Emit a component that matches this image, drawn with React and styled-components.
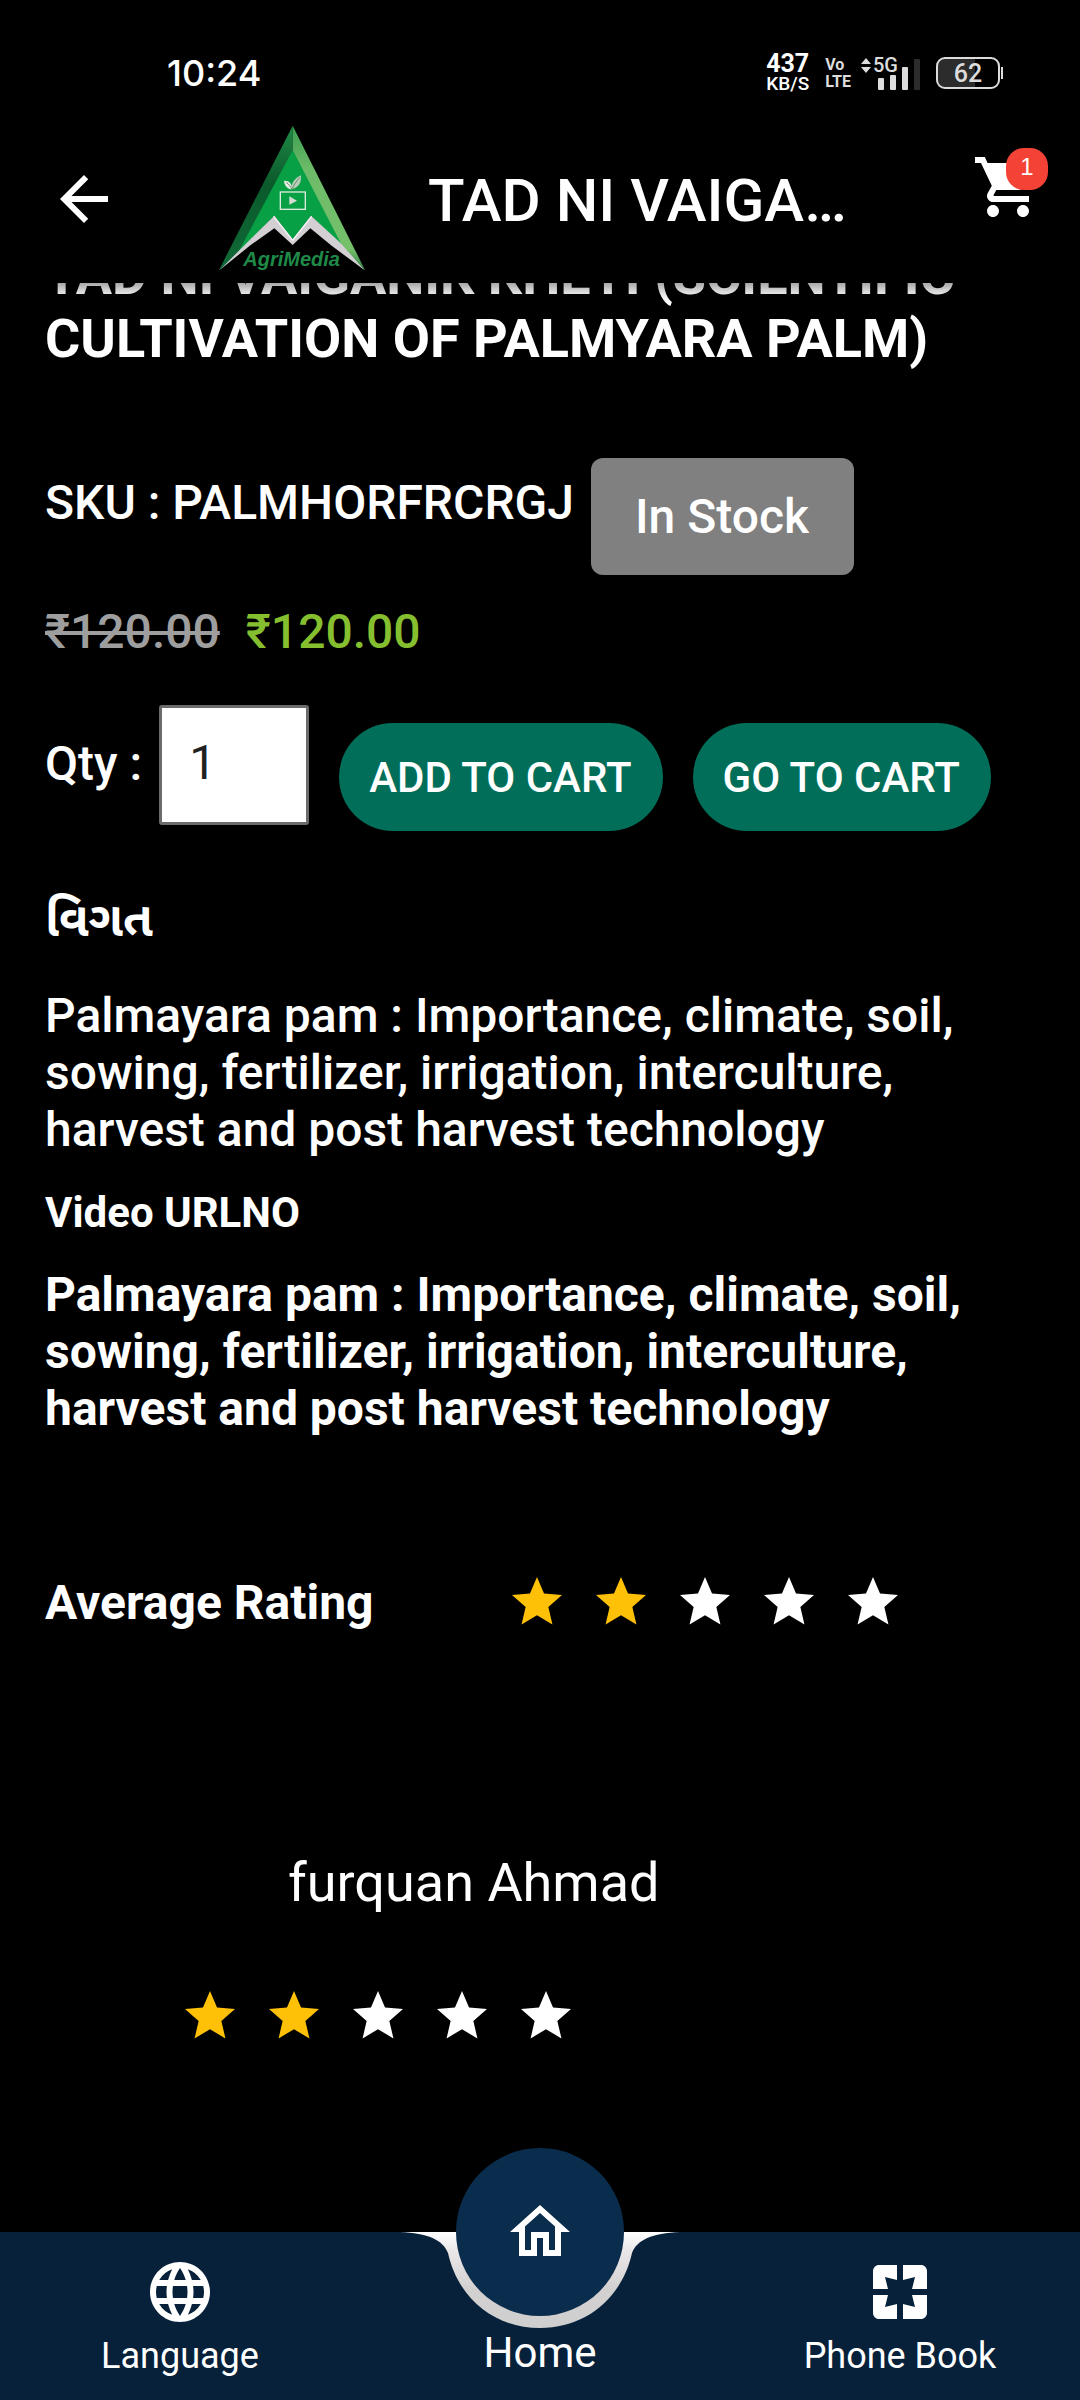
import { useState } from "react";
import styled, { createGlobalStyle } from "styled-components";
import {
  MdArrowBack,
  MdLanguage,
  MdOutlineHome,
  MdPages,
  MdShoppingCart,
  MdStar,
} from "react-icons/md";

const summary =
  "Palmayara pam : Importance, climate, soil, sowing, fertilizer, irrigation, interculture, harvest and post harvest technology";

const SignalIcon = () => (
  <svg width="60" height="34" viewBox="0 0 60 34" aria-hidden="true">
    <path d="M0 8L5 2l5 6zM0 11L5 17l5-6z" fill="#dcdcdc" />
    <rect x="17" y="22" width="6" height="12" rx="1" fill="#dcdcdc" />
    <rect x="29" y="19" width="6" height="15" rx="1" fill="#dcdcdc" />
    <rect x="41" y="11" width="6" height="23" rx="1" fill="#dcdcdc" />
    <rect x="53" y="3" width="6" height="31" rx="1" fill="#2c2c2c" />
    <text
      x="12"
      y="16"
      fill="#dcdcdc"
      fontFamily="Roboto, sans-serif"
      fontSize="20"
      fontWeight="500"
    >
      5G
    </text>
  </svg>
);

const Logo = () => (
  <svg width="150" height="150" viewBox="50 30 450 450" role="img" aria-label="AgriMedia">
    <defs>
      <linearGradient id="leftSide" x1="0" y1="0" x2="0" y2="1">
        <stop offset="0" stopColor="#1f8a45" />
        <stop offset="0.4" stopColor="#0b5a2c" />
        <stop offset="1" stopColor="#0f6a37" />
      </linearGradient>
      <linearGradient id="rightSide" x1="0" y1="0" x2="0" y2="1">
        <stop offset="0" stopColor="#3a9e50" />
        <stop offset="0.3" stopColor="#6dbb69" />
        <stop offset="0.85" stopColor="#76c06a" />
        <stop offset="1" stopColor="#2e7d45" />
      </linearGradient>
    </defs>
    <path d="M277 35L55 470L130 402L277 110z" fill="url(#leftSide)" />
    <path d="M277 35L495 470L425 405L277 110z" fill="url(#rightSide)" />
    <path d="M277 108L112 418L222 306L277 378L332 306L432 408z" fill="#08a045" />
    <path
      d="M222 305L277 376L332 305L420 386L492 468L395 396L330 343L277 393L222 343L150 394L58 468L130 396z"
      fill="#d3cfd3"
    />
    <path d="M220 307L277 379L334 307" fill="none" stroke="#f6f4f6" strokeWidth="4" />
    <rect x="240" y="234" width="75" height="52" fill="none" stroke="#dfe9df" strokeWidth="4" />
    <path d="M267 247L290 260L267 272z" fill="#d5dcd5" />
    <path d="M275 226C270 205 288 190 302 184C303 205 298 218 275 226z" fill="#b9cbb9" />
    <path d="M275 226C262 226 252 216 251 200C266 199 276 208 275 226z" fill="#e4ece4" />
    <path d="M275 226C270 217 265 209 258 206M275 226C280 212 289 201 299 190" fill="none" stroke="#6b8f6b" strokeWidth="3" />
    <text
      x="274"
      y="456"
      textAnchor="middle"
      fill="#1f8a48"
      fontFamily="'Liberation Sans', Arial, sans-serif"
      fontSize="60"
      fontStyle="italic"
      fontWeight="700"
    >
      AgriMedia
    </text>
  </svg>
);

const NotchShape = () => (
  <svg width="280" height="96" viewBox="0 0 280 96" aria-hidden="true">
    <defs>
      <linearGradient id="notch" x1="0" y1="0" x2="0" y2="1">
        <stop offset="0" stopColor="#ffffff" />
        <stop offset="0.2" stopColor="#e9e7e8" />
        <stop offset="0.6" stopColor="#d3d0d0" />
        <stop offset="1" stopColor="#cfcfcf" />
      </linearGradient>
    </defs>
    <path
      d="M0 0C28 1 43 8 48 21C58 66 94 96 140 96C186 96 222 66 232 21C237 8 252 1 280 0z"
      fill="url(#notch)"
    />
  </svg>
);

const Rating = ({ value }) => (
  <Stars role="img" aria-label={`${value} out of 5 stars`}>
    {[1, 2, 3, 4, 5].map((n) => (
      <Star key={n} $filled={n <= value}>
        <MdStar size={60} />
      </Star>
    ))}
  </Stars>
);

const App = () => {
  const [qty, setQty] = useState("1");

  return (
    <Screen>
      <GlobalStyle />
      <StatusBar>
        <Clock>10:24</Clock>
        <StatusIcons>
          <NetSpeed>
            <b>437</b>
            <span>KB/S</span>
          </NetSpeed>
          <Volte>
            <span>Vo</span>
            <span>LTE</span>
          </Volte>
          <SignalIcon />
          <Battery>62</Battery>
        </StatusIcons>
      </StatusBar>

      <AppBar>
        <IconButton type="button" aria-label="Back">
          <MdArrowBack size={72} />
        </IconButton>
        <Logo />
        <BarTitle>TAD NI VAIGANIK KHETI</BarTitle>
        <CartButton type="button" aria-label="Cart">
          <MdShoppingCart size={72} />
          <CartCount>1</CartCount>
        </CartButton>
      </AppBar>

      <Content>
        <ProductTitle>
          TAD NI VAIGANIK KHETI (SCIENTIFIC CULTIVATION OF PALMYARA PALM)
        </ProductTitle>

        <SkuRow>
          <Sku>SKU : PALMHORFRCRGJ</Sku>
          <StockBadge>In Stock</StockBadge>
        </SkuRow>

        <PriceRow>
          <OldPrice>₹120.00</OldPrice>
          <Price>₹120.00</Price>
        </PriceRow>

        <BuyRow>
          <QtyLabel htmlFor="qty">Qty :</QtyLabel>
          <QtyInput
            id="qty"
            type="text"
            inputMode="numeric"
            value={qty}
            onChange={(e) => setQty(e.target.value)}
          />
          <PillButton type="button">ADD TO CART</PillButton>
          <PillButton type="button">GO TO CART</PillButton>
        </BuyRow>

        <SectionTitle lang="gu">વિગત</SectionTitle>
        <Text>{summary}</Text>
        <VideoLabel>Video URLNO</VideoLabel>
        <Text $bold>{summary}</Text>

        <AverageRow>
          <AverageLabel>Average Rating</AverageLabel>
          <Rating value={2} />
        </AverageRow>

        <Review>
          <Reviewer>furquan Ahmad</Reviewer>
          <Rating value={2} />
        </Review>
      </Content>

      <BottomNav>
        <Notch>
          <NotchShape />
        </Notch>
        <NavItem href="#language">
          <MdLanguage size={72} />
          <span>Language</span>
        </NavItem>
        <HomeItem href="#home">
          <HomeCircle>
            <MdOutlineHome size={72} />
          </HomeCircle>
          <span>Home</span>
        </HomeItem>
        <NavItem href="#phone-book">
          <MdPages size={72} />
          <span>Phone Book</span>
        </NavItem>
      </BottomNav>
    </Screen>
  );
};

const GlobalStyle = createGlobalStyle`
  * {
    box-sizing: border-box;
  }

  body {
    margin: 0;
    background: #000;
    color: #fff;
    font-family: Roboto, "Noto Sans", sans-serif;
  }

  h1, h2, h3, p {
    margin: 0;
  }

  svg {
    display: block;
    flex-shrink: 0;
  }
`;

const Screen = styled.div`
  display: flex;
  flex-direction: column;
  min-height: 100vh;
`;

const StatusBar = styled.div`
  display: flex;
  justify-content: space-between;
  align-items: center;
  height: 115px;
  padding: 30px 80px 0 167px;
`;

const Clock = styled.span`
  font-family: Inter, Roboto, sans-serif;
  font-size: 36px;
  font-weight: 500;
  line-height: 44px;
`;

const StatusIcons = styled.div`
  display: flex;
  align-items: center;
`;

const NetSpeed = styled.div`
  display: flex;
  flex-direction: column;
  align-items: center;
  margin-right: 16px;
  font-size: 19px;
  font-weight: 500;
  line-height: 19px;

  b {
    font-size: 25px;
    line-height: 21px;
  }
`;

const Volte = styled.div`
  display: flex;
  flex-direction: column;
  margin-right: 10px;
  color: #dcdcdc;
  font-size: 16px;
  font-weight: 700;
  line-height: 17px;
`;

const Battery = styled.div`
  position: relative;
  width: 64px;
  height: 32px;
  margin-left: 15px;
  border: 2px solid #dcdcdc;
  border-radius: 9px;
  background: linear-gradient(to right, #2c2c2c 62%, #000 62%);
  background-clip: padding-box;
  color: #dcdcdc;
  font-size: 25px;
  font-weight: 500;
  line-height: 29px;
  text-align: center;

  &::after {
    content: "";
    position: absolute;
    top: 8px;
    right: -5px;
    width: 2px;
    height: 12px;
    background: #dcdcdc;
  }
`;

const AppBar = styled.header`
  position: relative;
  z-index: 1;
  display: flex;
  align-items: center;
  height: 168px;
  padding: 0 36px 0 48px;
  background: #000;
  box-shadow: 0 4px 16px rgba(0, 0, 0, 0.5);

  > svg {
    margin-left: 97px;
  }
`;

const IconButton = styled.button`
  padding: 0;
  border: 0;
  background: none;
  color: #fff;
  cursor: pointer;
`;

const BarTitle = styled.h1`
  flex: 1;
  min-width: 0;
  margin: 0 120px 0 61px;
  padding-top: 4px;
  overflow: hidden;
  font-size: 60px;
  font-weight: 500;
  line-height: 72px;
  text-overflow: ellipsis;
  white-space: nowrap;
`;

const CartButton = styled(IconButton)`
  position: relative;
  margin-bottom: 24px;
`;

const CartCount = styled.span`
  position: absolute;
  top: -3px;
  right: -4px;
  width: 42px;
  height: 42px;
  border-radius: 18px;
  background: #f44336;
  font-size: 24px;
  line-height: 38px;
  text-align: center;
`;

const Content = styled.main`
  flex: 1;
  padding: 0 45px;
`;

const ProductTitle = styled.h2`
  margin-top: -39px;
  font-size: 54px;
  font-weight: 700;
  line-height: 63px;
`;

const SkuRow = styled.div`
  display: flex;
  align-items: flex-start;
  margin-top: 88px;
`;

const Sku = styled.span`
  padding-top: 16px;
  font-size: 48px;
  font-weight: 500;
  line-height: 57px;
`;

const StockBadge = styled.span`
  margin-left: 17px;
  padding: 30px 45px 30px 44px;
  border-radius: 12px;
  background: #808080;
  font-size: 48px;
  font-weight: 500;
  line-height: 57px;
`;

const PriceRow = styled.div`
  display: flex;
  gap: 26px;
  margin-top: 28px;
  font-size: 48px;
  font-weight: 500;
  line-height: 57px;
`;

const OldPrice = styled.del`
  color: #9e9e9e;
`;

const Price = styled.span`
  color: #85bf2f;
`;

const BuyRow = styled.div`
  display: flex;
  align-items: flex-start;
  margin-top: 45px;
`;

const QtyLabel = styled.label`
  padding-top: 30px;
  font-size: 48px;
  font-weight: 500;
  line-height: 57px;
`;

const QtyInput = styled.input`
  width: 150px;
  height: 120px;
  margin-left: 17px;
  padding: 0 27px 6px;
  border: 3px solid #6b6b6b;
  border-radius: 3px;
  background: #fff;
  color: #212121;
  font-family: inherit;
  font-size: 48px;
`;

const PillButton = styled.button`
  height: 108px;
  margin: 18px 0 0 30px;
  padding: 0 31px 0 30px;
  border: 0;
  border-radius: 54px;
  background: #016e59;
  color: #fff;
  font-family: inherit;
  font-size: 42px;
  font-weight: 500;
  white-space: nowrap;
  cursor: pointer;
`;

const SectionTitle = styled.h3`
  margin: 60px 0 39px;
  font-family: Roboto, "Noto Sans Gujarati", "Noto Sans", sans-serif;
  font-size: 48px;
  font-weight: 700;
  line-height: 57px;
`;

const Text = styled.p`
  font-size: 48px;
  font-weight: ${(props) => (props.$bold ? 700 : 500)};
  line-height: 57px;
`;

const VideoLabel = styled.p`
  margin: 30px 0 28px;
  font-size: 42px;
  font-weight: 700;
  line-height: 50px;
`;

const AverageRow = styled.div`
  display: flex;
  align-items: center;
  margin-top: 135px;
`;

const AverageLabel = styled.span`
  width: 450px;
  font-size: 48px;
  font-weight: 700;
  line-height: 57px;
`;

const Stars = styled.div`
  display: flex;
`;

const Star = styled.span`
  padding: 0 12px;
  color: ${(props) => (props.$filled ? "#ffc107" : "#fff")};
`;

const Review = styled.div`
  padding: 219px 123px 60px;
`;

const Reviewer = styled.p`
  margin: 0 0 72px 120px;
  font-size: 54px;
  line-height: 63px;
`;

const BottomNav = styled.nav`
  position: relative;
  display: grid;
  grid-template-columns: repeat(3, 1fr);
  height: 168px;
  background: #07213a;
`;

const Notch = styled.div`
  position: absolute;
  top: 0;
  left: 0;
  right: 0;
  display: flex;
  justify-content: center;
`;

const NavItem = styled.a`
  display: flex;
  flex-direction: column;
  align-items: center;
  gap: 7px;
  padding-top: 24px;
  color: #fff;
  font-size: 36px;
  line-height: 42px;
  text-decoration: none;
`;

const HomeItem = styled(NavItem)`
  position: relative;
  gap: 12px;
  margin-top: -84px;
  padding-top: 0;
  font-size: 42px;
  line-height: 49px;
`;

const HomeCircle = styled.span`
  display: flex;
  align-items: center;
  justify-content: center;
  width: 168px;
  height: 168px;
  border-radius: 50%;
  background: #0a2d4d;
`;

export default App;
